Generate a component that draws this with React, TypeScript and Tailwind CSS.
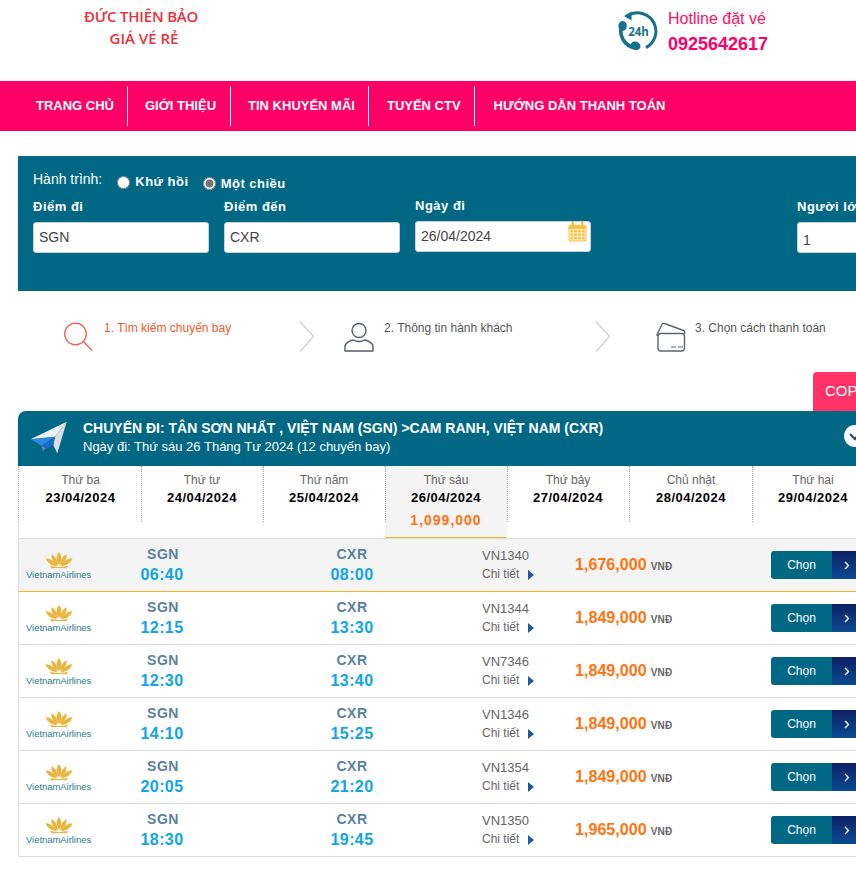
import React from "react";

const flights = [
  { from: "06:40", to: "08:00", code: "VN1340", price: "1,676,000", active: true },
  { from: "12:15", to: "13:30", code: "VN1344", price: "1,849,000" },
  { from: "12:30", to: "13:40", code: "VN7346", price: "1,849,000" },
  { from: "14:10", to: "15:25", code: "VN1346", price: "1,849,000" },
  { from: "20:05", to: "21:20", code: "VN1354", price: "1,849,000" },
  { from: "18:30", to: "19:45", code: "VN1350", price: "1,965,000" },
];

const days = [
  { d: "Thứ ba", n: "23/04/2024", c: "-ml-px w-[123px] pl-[2px]" },
  { d: "Thứ tư", n: "24/04/2024", c: "w-[122px]" },
  { d: "Thứ năm", n: "25/04/2024", c: "w-[122px]" },
  { d: "Thứ sáu", n: "26/04/2024", p: "1,099,000", c: "w-[122px] border-b border-[#fbb427] bg-[#f4f4f4]" },
  { d: "Thứ bảy", n: "27/04/2024", c: "w-[122px]" },
  { d: "Chủ nhật", n: "28/04/2024", c: "w-[123px] pl-px" },
  { d: "Thứ hai", n: "29/04/2024", c: "w-[122px]" },
];

const navItems = [
  { t: "TRANG CHỦ", c: "pl-[36px] pr-[13px] border-r-[1.5px]" },
  { t: "GIỚI THIỆU", c: "pl-[17px] pr-[14px] border-r-[1.5px]" },
  { t: "TIN KHUYẾN MÃI", c: "pl-[17px] pr-[13px] border-r-[1.5px]" },
  { t: "TUYẾN CTV", c: "pl-[18px] pr-[13px] border-r-[1.5px]" },
  { t: "HƯỚNG DẪN THANH TOÁN", c: "pl-[19px]" },
];

function HotlineIcon() {
  return (
    <svg width="40" height="40" viewBox="0 0 40 40" fill="none" className="shrink-0">
      <path d="M11 4 A18.2 18.2 0 1 1 28 36.6" stroke="#17708c" strokeWidth="3" />
      <path d="M6 5 L13.5 0.5 L13.5 9.5 Z" fill="#17708c" />
      <path d="M3.6 15 A17 17 0 0 0 16.5 36.8" stroke="#17708c" strokeWidth="3.6" />
      <ellipse cx="4.6" cy="15" rx="4.2" ry="5" fill="#17708c" />
      <ellipse cx="17.5" cy="34.8" rx="5" ry="4.2" transform="rotate(20 17.5 34.8)" fill="#17708c" />
      <text x="20.5" y="24.5" textAnchor="middle" fontFamily="'Open Sans', sans-serif" fontWeight="700" fontSize="11.5" fill="#17708c">24h</text>
    </svg>
  );
}

function CalendarIcon() {
  return (
    <svg width="19" height="21" viewBox="0 0 19 21" fill="none">
      <rect x="0.5" y="4" width="18" height="16.5" rx="1.5" fill="#fbbf3c" />
      <rect x="3.5" y="0" width="2.5" height="5" rx="1" fill="#fbbf3c" />
      <rect x="13" y="0" width="2.5" height="5" rx="1" fill="#fbbf3c" />
      <path d="M2 8.5 H17 V19 H2 Z M2 12 H17 M2 15.5 H17 M5.7 8.5 V19 M9.5 8.5 V19 M13.3 8.5 V19" stroke="#fff" strokeWidth="0.8" />
    </svg>
  );
}

function SearchIcon() {
  return (
    <svg width="30" height="30" viewBox="0 0 30 30" fill="none" className="shrink-0">
      <circle cx="11.5" cy="12" r="10.8" stroke="#ef5b46" strokeWidth="1.3" />
      <path d="M19.5 19.5 L28 28.5" stroke="#ef5b46" strokeWidth="1.3" />
    </svg>
  );
}

function UserIcon() {
  return (
    <svg width="30" height="30" viewBox="0 0 30 30" fill="none" className="shrink-0">
      <circle cx="15" cy="8.5" r="7" stroke="#555b6b" strokeWidth="1.4" />
      <path d="M1 29 V24.5 C1 21 7 18 9.5 18 C12 20 18 20 20.5 18 C23 18 29 21 29 24.5 V29 Z" stroke="#555b6b" strokeWidth="1.4" strokeLinejoin="round" />
    </svg>
  );
}

function CardIcon() {
  return (
    <svg width="30" height="30" viewBox="0 0 30 30" fill="none" className="shrink-0">
      <rect x="2" y="11.5" width="26.5" height="17.5" rx="3" stroke="#5f6472" strokeWidth="1.4" />
      <path d="M1.5 14 L1 12.5 L6 2.5 C6.5 1.5 7.5 1 8.5 1.5 L27.5 8.5 C29 9 29 10.5 28.5 12" stroke="#5f6472" strokeWidth="1.4" />
      <path d="M15 25 H20 M22 25 H27" stroke="#5f6472" strokeWidth="1.2" />
    </svg>
  );
}

function Chevron() {
  return (
    <svg width="16" height="31" viewBox="0 0 16 31" fill="none" className="shrink-0">
      <path d="M1 0.5 L14.5 15.5 L1 30.5" stroke="#cfcfcf" strokeWidth="1.2" />
    </svg>
  );
}

function Plane() {
  return (
    <svg width="40" height="36" viewBox="0 0 40 36" className="shrink-0">
      <path d="M37.7 1.7 L1.7 19.3 L26 16.7 Z" fill="#eef3f8" />
      <path d="M37.7 1.7 L26 16.7 L24.3 25 L28.3 33.3 Z" fill="#d8dfe6" />
      <path d="M1.7 19.3 L26 16.7 L12.7 26 Z" fill="#2f86e0" />
      <path d="M26 16.7 L12.7 26 L15 30 L24.3 25 Z" fill="#1b6ac9" />
      <path d="M12.7 26 L13.7 31 L17 28.5 Z" fill="#6f8296" />
    </svg>
  );
}

function Lotus() {
  return (
    <svg width="28" height="17" viewBox="0 0 28 19" preserveAspectRatio="none" fill="#e8b640">
      <path d="M14 0 C17 4 17.5 9 14 14.5 C10.5 9 11 4 14 0 Z" />
      <path d="M6.5 2.5 C10 4 12.5 9 13 15 C8.5 12.5 6 8 6.5 2.5 Z" />
      <path d="M21.5 2.5 C18 4 15.5 9 15 15 C19.5 12.5 22 8 21.5 2.5 Z" />
      <path d="M0.5 7 C5 7 10 11 12 15.5 C7 16 2.5 12.5 0.5 7 Z" />
      <path d="M27.5 7 C23 7 18 11 16 15.5 C21 16 25.5 12.5 27.5 7 Z" />
      <path d="M5 15.5 C10 17 18 17 23 15.5 L21.5 18.5 C17 17.8 11 17.8 6.5 18.5 Z" />
    </svg>
  );
}

function Field({ label, value, shift, low }: { label: string; value: string; shift?: boolean; low?: boolean }) {
  return (
    <div className={`w-[176px] shrink-0 ${shift ? "-mt-px" : ""}`}>
      <div className="h-[22px] text-[13px] font-bold tracking-[0.5px] leading-[16px] text-white">{label}</div>
      <div className={`relative mt-[1px] flex h-[31px] items-center rounded-[3px] border border-[#ccd2d6] bg-white pl-[5px] text-[14px] text-[#444] ${low ? "pt-[6px]" : ""}`}>
        {value}
        {shift && (
          <span className="absolute right-[3px] -top-px leading-none">
            <CalendarIcon />
          </span>
        )}
      </div>
    </div>
  );
}

export default function App() {
  return (
    <div className="relative h-[869px] w-[856px] overflow-hidden bg-white font-['Liberation_Sans',Arial,sans-serif]">
      <div className="w-[1000px]">
        <header className="flex h-[81px] items-start">
          <div className="ml-[84px] mt-[5px] w-[114px] whitespace-nowrap text-center font-['Open_Sans',sans-serif] text-[15px] font-semibold leading-[22px] tracking-[-0.2px] text-[#e8313a]">
            <div>ĐỨC THIÊN BẢO</div>
            <div className="pl-[6px] tracking-[0px]">GIÁ VÉ RẺ</div>
          </div>
          <div className="ml-[420px] mt-[11px] flex">
            <HotlineIcon />
            <div className="ml-[10px] text-[#ff0f66]">
              <div className="text-[16px] leading-[16px]">Hotline đặt vé</div>
              <div className="mt-[7px] text-[18px] font-bold leading-[21px] text-[#ff0066]">0925642617</div>
            </div>
          </div>
        </header>

        <nav className="flex h-[50px] items-center bg-[#ff0066]">
          {navItems.map((n) => (
            <div key={n.t} className={`flex h-[40px] items-center border-white text-[13px] font-bold text-white ${n.c}`}>
              {n.t}
            </div>
          ))}
        </nav>

        <section className="ml-[18px] mt-[25px] h-[135px] bg-[#006885] pl-[15px] pt-[15px]">
          <div className="flex h-[28px] items-start text-white">
            <span className="text-[14px] leading-[17px]">Hành trình:</span>
            <label className="ml-[15px] mt-[3px] flex items-center">
              <input type="radio" name="t" readOnly className="m-0 h-[13px] w-[13px] accent-[#757575]" />
              <span className="ml-[5px] text-[13px] font-bold leading-[16px] tracking-[0.5px]">Khứ hồi</span>
            </label>
            <label className="ml-[14px] mt-[3px] flex items-center">
              <input type="radio" name="t" readOnly defaultChecked className="m-0 h-[13px] w-[13px] accent-[#757575]" />
              <span className="ml-[5px] mt-[2px] text-[13px] font-bold leading-[16px] tracking-[0.5px]">Một chiều</span>
            </label>
          </div>
          <div className="flex items-start gap-[15px]">
            <Field label="Điểm đi" value="SGN" />
            <Field label="Điểm đến" value="CXR" />
            <Field label="Ngày đi" value="26/04/2024" shift />
            <div className="ml-[191px]">
              <Field label="Người lớn" value="1" low />
            </div>
          </div>
        </section>

        <section className="ml-[46px] mt-[30px] flex h-[51px] items-start">
          <div className="ml-[18px] mt-px"><SearchIcon /></div>
          <div className="ml-[10px] w-[195px] text-[12px] leading-[14px] text-[#f15a29]">1. Tìm kiếm chuyến bay</div>
          <Chevron />
          <div className="ml-[29px] mt-px"><UserIcon /></div>
          <div className="ml-[10px] w-[211px] text-[12px] leading-[14px] text-[#555]">2. Thông tin hành khách</div>
          <Chevron />
          <div className="ml-[45px] mt-px"><CardIcon /></div>
          <div className="ml-[9px] text-[12px] leading-[14px] text-[#555]">3. Chọn cách thanh toán</div>
        </section>

        <div className="ml-[813px] flex h-[39px] w-[100px] items-center rounded-tl-[4px] bg-[#ff3366] pl-[12px] text-[15px] text-white">
          COPY
        </div>

        <section className="relative ml-[18px] flex h-[55px] items-start rounded-t-[8px] bg-[#006885] text-white">
          <div className="ml-[11px] mt-[9px]"><Plane /></div>
          <div className="ml-[14px] mt-[9px]">
            <div className="text-[14px] font-bold leading-[17px]">CHUYẾN ĐI: TÂN SƠN NHẤT , VIỆT NAM (SGN) &gt;CAM RANH, VIỆT NAM (CXR)</div>
            <div className="mt-[2px] text-[13px] leading-[16px]">Ngày đi: Thứ sáu 26 Tháng Tư 2024 (12 chuyến bay)</div>
          </div>
          <div className="absolute left-[826px] top-[14px] flex h-[22px] w-[22px] items-center justify-center rounded-full bg-white">
            <svg width="12" height="10" viewBox="0 0 12 10" fill="none">
              <path d="M1 3 L6 8 L11 2" stroke="#17576e" strokeWidth="2.2" />
            </svg>
          </div>
        </section>

        <div className="ml-[18px] w-[900px] border-l border-[#dcdcdc]">
          <div className="flex h-[73px] border-b border-[#dddddd]">
            {days.map((x) => (
              <div key={x.n} className={`flex h-[72px] shrink-0 flex-col items-center pt-[7px] ${x.c}`}>
                <div className="text-[12px] leading-[15px] text-[#666]">{x.d}</div>
                <div className="mt-[2px] text-[13px] font-bold leading-[16px] tracking-[0.5px] text-black">{x.n}</div>
                {x.p && <div className="mt-[6px] text-[14px] font-bold leading-[17px] tracking-[1px] text-[#ff7410]">{x.p}</div>}
              </div>
            ))}
          </div>
          <div className="pointer-events-none absolute left-0 top-[466px] h-[56px] w-full">
            {[18, 141, 263, 385, 507, 629, 752].map((x) => (
              <span key={x} className="absolute top-0 h-[56px] border-l border-dotted border-[#a8a8a8] bg-white" style={{ left: x }} />
            ))}
          </div>

          {flights.map((f) => (
            <div
              key={f.code}
              className={`flex h-[53px] items-center border-b ${
                f.active ? "border-[#fbb427] bg-[#f4f4f4]" : "border-[#dddddd] bg-white"
              }`}
            >
              <div className="ml-[7px] mt-[2px] flex w-[86px] shrink-0 flex-col">
                <div className="ml-[19px]"><Lotus /></div>
                <div className="text-[9.5px] leading-[11px] tracking-[-0.05px] text-[#2b7d8e]">VietnamAirlines</div>
              </div>
              <div className="w-[100px] shrink-0 text-center">
                <div className="pl-[2px] text-[14px] font-bold leading-[17px] tracking-[0.5px] text-[#5a7fa3]">SGN</div>
                <div className="mt-[2px] text-[16px] font-bold leading-[19px] tracking-[0.4px] text-[#0ea5e9]">{f.from}</div>
              </div>
              <div className="ml-[90px] w-[100px] shrink-0 text-center">
                <div className="text-[14px] font-bold leading-[17px] tracking-[0.5px] text-[#5a7fa3]">CXR</div>
                <div className="mt-[2px] text-[16px] font-bold leading-[19px] tracking-[0.4px] text-[#0ea5e9]">{f.to}</div>
              </div>
              <div className="ml-[80px] w-[93px] shrink-0 text-[#666]">
                <div className="text-[13px] leading-[15px]">{f.code}</div>
                <div className="mt-[4px] flex items-center text-[12px] leading-[15px]">
                  Chi tiết
                  <span className="ml-[9px] mt-[1px] h-0 w-0 border-y-[5px] border-l-[6px] border-y-transparent border-l-[#1f5a9c]" />
                </div>
              </div>
              <div className="flex w-[196px] shrink-0 items-baseline">
                <span className="text-[16px] font-bold tracking-[0.05px] text-[#ff7410]">{f.price}</span>
                <span className="ml-[4px] text-[10px] font-bold tracking-[0.2px] text-[#666]">VNĐ</span>
              </div>
              <div className="flex h-[28px] overflow-hidden rounded-[3px] text-white">
                <div className="flex w-[61px] items-center justify-center bg-[#006885] text-[12px]">Chọn</div>
                <div className="flex w-[55px] items-center bg-gradient-to-b from-[#0d1f66] to-[#0b4a91] pl-[12px]">
                  <svg width="6" height="9" viewBox="0 0 6 9" fill="none">
                    <path d="M1 1 L4.5 4.5 L1 8" stroke="#fff" strokeWidth="1.4" />
                  </svg>
                </div>
              </div>
            </div>
          ))}
        </div>
      </div>
    </div>
  );
}
